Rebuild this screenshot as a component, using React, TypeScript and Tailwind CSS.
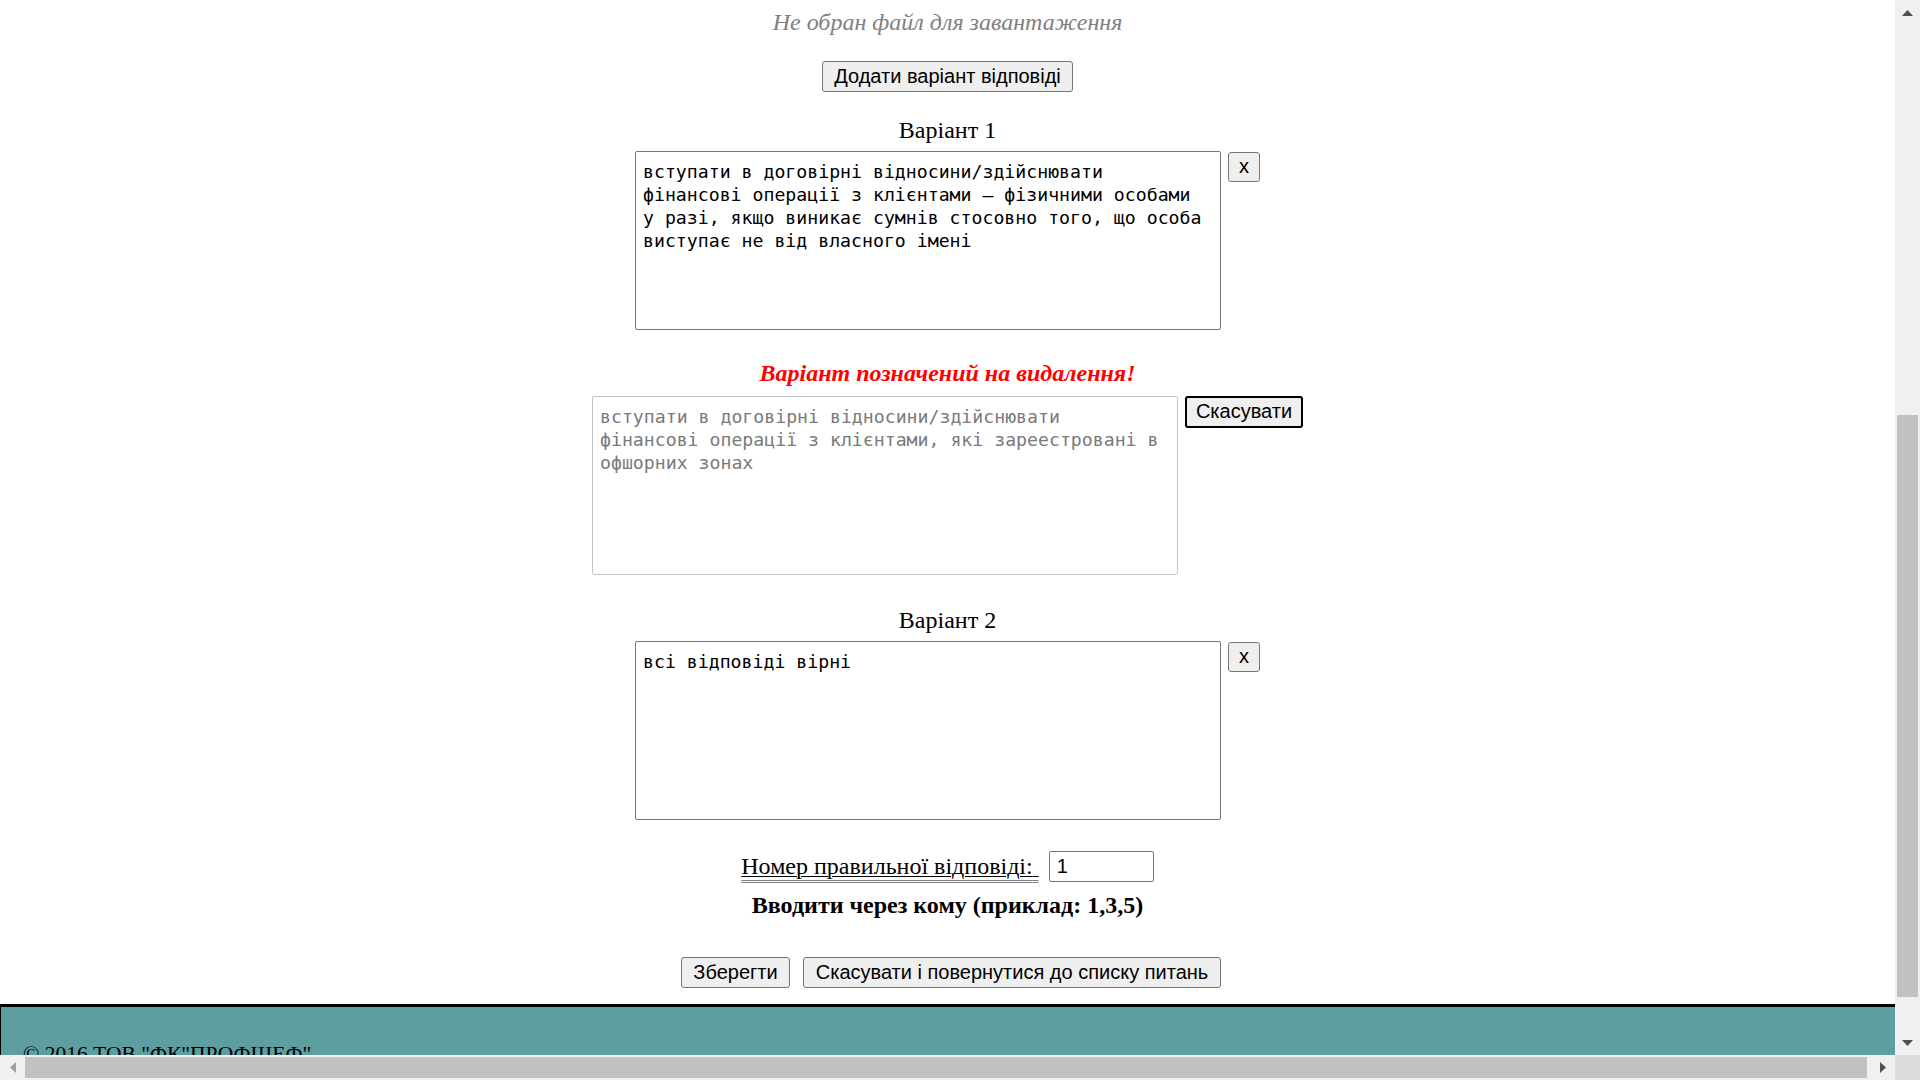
import type { ReactNode } from "react";

const serif = "font-['Liberation_Serif','Times_New_Roman',serif]";

function Btn({ children, className }: { children: ReactNode; className?: string }) {
  return (
    <button
      type="button"
      className={`shrink-0 flex items-center justify-center pb-[2px] bg-[#efefef] border border-[#767676] rounded-[3px] font-['Liberation_Sans',Arial,sans-serif] text-[20px] leading-none text-black ${className ?? ""}`}
    >
      {children}
    </button>
  );
}

function Area({ value, muted }: { value: string; muted?: boolean }) {
  return (
    <textarea
      readOnly
      value={value}
      className={
        muted
          ? "w-[586px] h-[179px] shrink-0 resize-none overflow-hidden outline-none bg-white border border-[#c4c4c4] rounded-[2px] px-[7px] py-[8px] font-['DejaVu_Sans_Mono',monospace] text-[18.2px] leading-[23px] text-[#7a7a7a]"
          : "w-[586px] h-[179px] shrink-0 resize-none overflow-hidden outline-none bg-white border border-[#767676] rounded-[2px] px-[7px] py-[8px] font-['DejaVu_Sans_Mono',monospace] text-[18.2px] leading-[23px] text-black"
      }
    />
  );
}

function VScroll() {
  return (
    <div className="w-[25px] shrink-0 bg-[#f0f0f0] flex flex-col">
      <div className="h-[25px] flex items-center justify-center">
        <svg width="11" height="6" viewBox="0 0 11 6">
          <path d="M5.5 0L11 6H0Z" fill="#505050" />
        </svg>
      </div>
      <div className="flex-1 px-[2px]">
        <div className="mt-[390px] h-[582px] bg-[#c1c1c1]" />
      </div>
      <div className="h-[25px] flex items-center justify-center">
        <svg width="11" height="6" viewBox="0 0 11 6">
          <path d="M0 0H11L5.5 6Z" fill="#505050" />
        </svg>
      </div>
    </div>
  );
}

function HScroll() {
  return (
    <div className="h-[25px] shrink-0 flex bg-[#f0f0f0]">
      <div className="w-[25px] flex items-center justify-center">
        <svg width="6" height="11" viewBox="0 0 6 11">
          <path d="M6 0V11L0 5.5Z" fill="#a0a0a0" />
        </svg>
      </div>
      <div className="flex-1 py-[2px]">
        <div className="h-full w-[1842px] bg-[#c1c1c1]" />
      </div>
      <div className="w-[25px] flex items-center justify-center">
        <svg width="6" height="11" viewBox="0 0 6 11">
          <path d="M0 0L6 5.5L0 11Z" fill="#505050" />
        </svg>
      </div>
      <div className="w-[25px] bg-[#dcdcdc]" />
    </div>
  );
}

const v1 =
  "вступати в договірні відносини/здійснювати\nфінансові операції з клієнтами – фізичними особами\nу разі, якщо виникає сумнів стосовно того, що особа\nвиступає не від власного імені";
const v2 =
  "вступати в договірні відносини/здійснювати\nфінансові операції з клієнтами, які зареестровані в\nофшорних зонах";
const v3 = "всі відповіді вірні";

export default function App() {
  return (
    <div className="w-[1920px] h-[1080px] flex flex-col overflow-hidden bg-white">
      <div className="flex flex-1 min-h-0">
        <main className="flex-1 min-w-0 overflow-hidden">
          <div className={`flex flex-col items-center ${serif} text-[24px] leading-[26px] text-black`}>
            <p className="mt-[9px] italic text-[#808080]">Не обран файл для завантаження</p>

            <Btn className="mt-[26px] w-[251px] h-[31px]">Додати варіант відповіді</Btn>

            <p className="mt-[25px]">Варіант 1</p>
            <div className="mt-[8px] flex items-start gap-[7px]">
              <Area value={v1} />
              <Btn className="mt-[1px] w-[32px] h-[30px]">x</Btn>
            </div>

            <p className="mt-[30px] font-bold italic text-[#ff0000]">Варіант позначений на видалення!</p>
            <div className="mt-[10px] flex items-start gap-[7px]">
              <Area value={v2} muted />
              <Btn className="w-[118px] h-[32px] border-2 border-black">Скасувати</Btn>
            </div>

            <p className="mt-[32px]">Варіант 2</p>
            <div className="mt-[8px] flex items-start gap-[7px]">
              <Area value={v3} />
              <Btn className="mt-[1px] w-[32px] h-[30px]">x</Btn>
            </div>

            <div className="mt-[31px] flex items-center gap-[10px]">
              <label className="mb-[2px] underline decoration-double decoration-[#808080] decoration-1 underline-offset-[6px]">
                <span className="underline decoration-black decoration-1 underline-offset-[2px]">
                  Номер правильної відповіді:{"\u00a0"}
                </span>
              </label>
              <input
                readOnly
                value="1"
                className="w-[105px] h-[31px] border border-[#767676] rounded-[2px] px-[7px] outline-none font-['Liberation_Sans',Arial,sans-serif] text-[20px] text-black"
              />
            </div>

            <p className="mt-[10px] font-bold">Вводити через кому (приклад: 1,3,5)</p>

            <div className="mt-[39px] flex gap-[13px] pl-[7px]">
              <Btn className="w-[109px] h-[31px]">Зберегти</Btn>
              <Btn className="w-[418px] h-[31px]">Скасувати і повернутися до списку питань</Btn>
            </div>

            <footer className="mt-[16px] self-stretch h-[120px] shrink-0 bg-[#5f9ea0] border-t-[3px] border-l border-black pt-[34px] pl-[22px] text-[21.5px]">
              © 2016 ТОВ "ФК"ПРОФШЕФ"
            </footer>
          </div>
        </main>
        <VScroll />
      </div>
      <HScroll />
    </div>
  );
}
